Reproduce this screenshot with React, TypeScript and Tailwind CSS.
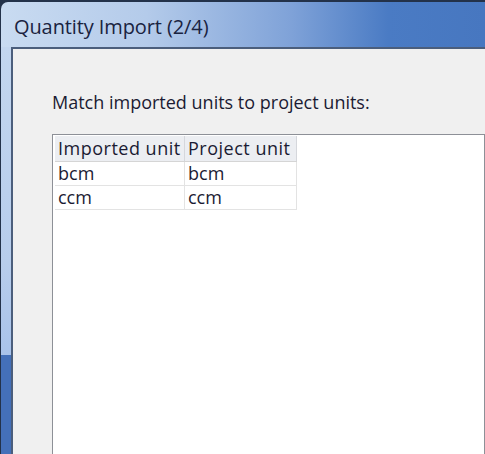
export default function App() {
  const font = { fontFamily: '"Open Sans", "Noto Sans", sans-serif' };
  return (
    <div
      className="w-[485px] h-[454px] overflow-hidden bg-[#23324a] pt-[2px] pl-[1px]"
      style={font}
    >
      <div className="flex h-full flex-col rounded-tl-[7px] bg-[linear-gradient(90deg,#c9dbf1_0%,#b4cbea_30%,#7fa2d8_60%,#4a7bc4_80%,#4777c0_100%)]">
        {/* Title bar */}
        <div className="flex h-[45px] shrink-0 items-center pl-[13px] pt-[4px]">
          <span className="text-[20px] tracking-[-0.1px] text-[#1a2340]">
            Quantity Import (2/4)
          </span>
        </div>

        <div className="flex min-h-0 flex-1">
          {/* Left frame */}
          <div className="flex w-[10px] shrink-0 flex-col">
            <div className="h-[308px] bg-[linear-gradient(180deg,#c3d6ef_0%,#b7cdec_70%,#a9c3ea_100%)]" />
            <div className="flex-1 bg-[#4470b9]" />
          </div>

          {/* Client area */}
          <div className="flex-1 overflow-hidden border-l-2 border-t-2 border-[#4b5e7c] bg-[#f0f0f0] pl-[39px] pt-[41px]">
            <p className="text-[18px] leading-[24px] text-[#1b1b33]">
              Match imported units to project units:
            </p>

            <div className="mt-[20px] h-[400px] border border-[#8d9097] bg-white pl-[2px] pt-[1px]">
              <div className="flex h-[26px] w-[242px] border-b border-[#d5d5d5] bg-[#eceef2] text-[18px] leading-[25px] tracking-[0.5px] text-[#1b1b33]">
                <div className="w-[130px] border-r border-[#d5d7dc] pl-[3px]">
                  Imported unit
                </div>
                <div className="w-[112px] border-r border-[#d5d7dc] pl-[3px]">
                  Project unit
                </div>
              </div>
              {["bcm", "ccm"].map((u) => (
                <div
                  key={u}
                  className="flex h-[24px] w-[242px] border-b border-[#e3e3e3] text-[18px] leading-[23px] text-[#1b1b33]"
                >
                  <div className="w-[130px] border-r border-[#e3e3e3] pl-[3px]">{u}</div>
                  <div className="w-[112px] border-r border-[#e3e3e3] pl-[3px]">{u}</div>
                </div>
              ))}
            </div>
          </div>
        </div>
      </div>
    </div>
  );
}
